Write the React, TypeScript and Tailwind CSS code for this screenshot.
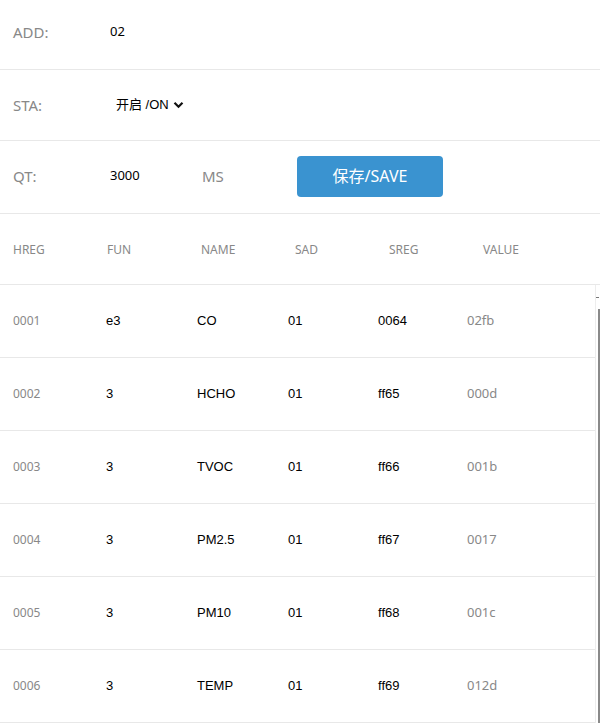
import React from 'react';

type Reg = { hreg: string; fun: string; name: string; sad: string; sreg: string; value: string };

const regs: Reg[] = [
  { hreg: '0001', fun: 'e3', name: 'CO', sad: '01', sreg: '0064', value: '02fb' },
  { hreg: '0002', fun: '3', name: 'HCHO', sad: '01', sreg: 'ff65', value: '000d' },
  { hreg: '0003', fun: '3', name: 'TVOC', sad: '01', sreg: 'ff66', value: '001b' },
  { hreg: '0004', fun: '3', name: 'PM2.5', sad: '01', sreg: 'ff67', value: '0017' },
  { hreg: '0005', fun: '3', name: 'PM10', sad: '01', sreg: 'ff68', value: '001c' },
  { hreg: '0006', fun: '3', name: 'TEMP', sad: '01', sreg: 'ff69', value: '012d' },
];

const yahei = "font-['Noto_Sans','Noto_Sans_CJK_SC',sans-serif]";
const arial = "font-['Liberation_Sans','Noto_Sans_CJK_SC',sans-serif]";

const headers = ['HREG', 'FUN', 'NAME', 'SAD', 'SREG', 'VALUE'];

export default function App() {
  return (
    <div className="w-[600px] h-[727px] overflow-hidden bg-white">
      {/* settings */}
      <div className="flex items-center h-[70px] border-b border-[#e8e8e8] pl-[13px] pb-[5px]">
        <span className={`${yahei} w-[97px] text-[15px] text-[#888]`}>ADD:</span>
        <span className={`${yahei} text-[13px] text-black`}>02</span>
      </div>
      <div className="flex items-center h-[71px] border-b border-[#e8e8e8] pl-[13px]">
        <span className={`${yahei} w-[103px] text-[15px] text-[#888]`}>STA:</span>
        <span className={`${arial} flex items-center gap-[4px] text-[13px] text-black`}>
          开启 /ON
          <svg width="11" height="8" viewBox="0 0 11 8">
            <path d="M1.5 1.8 L5.5 5.8 L9.5 1.8" fill="none" stroke="#111" strokeWidth="2.2" />
          </svg>
        </span>
      </div>
      <div className="flex items-center h-[73px] border-b border-[#e8e8e8] pl-[13px] pb-[2px]">
        <span className={`${yahei} w-[97px] text-[15px] text-[#888]`}>QT:</span>
        <span className={`${yahei} w-[92px] text-[13px] text-black`}>3000</span>
        <span className={`${yahei} w-[95px] text-[15px] text-[#888]`}>MS</span>
        <button className={`${yahei} w-[146px] h-[41px] rounded-[4px] bg-[#3a93d0] text-[16px] text-white`}>
          保存/SAVE
        </button>
      </div>

      {/* table header */}
      <div className="flex items-center h-[71px] border-b border-[#e8e8e8] pl-[13px] pt-[1px]">
        {headers.map(h => (
          <span key={h} className={`${yahei} w-[94px] text-[12px] text-[#888]`}>{h}</span>
        ))}
      </div>

      {/* table body with scrollbar */}
      <div className="flex">
        <div className="w-[595px]">
          {regs.map(r => (
            <div key={r.hreg} className="flex items-center h-[73px] border-b border-[#e8e8e8] pl-[13px]">
              <span className={`${yahei} w-[93px] text-[12px] text-[#888]`}>{r.hreg}</span>
              <span className={`${arial} w-[91px] text-[13px] text-black`}>{r.fun}</span>
              <span className={`${arial} w-[91px] text-[13px] text-black`}>{r.name}</span>
              <span className={`${arial} w-[90px] text-[13px] text-black`}>{r.sad}</span>
              <span className={`${arial} w-[89px] text-[13px] text-black`}>{r.sreg}</span>
              <span className={`${yahei} text-[13px] text-[#888]`}>{r.value}</span>
            </div>
          ))}
        </div>
        <div className="w-[5px] flex flex-col items-end border-l border-[#ededed]">
          <div className="h-[12px]" />
          <div className="w-[3px] h-[1px] bg-[#777] mr-[1px]" />
          <div className="h-[11px]" />
          <div className="w-[2px] flex-1 bg-[#8a8a8a]" />
        </div>
      </div>
    </div>
  );
}
